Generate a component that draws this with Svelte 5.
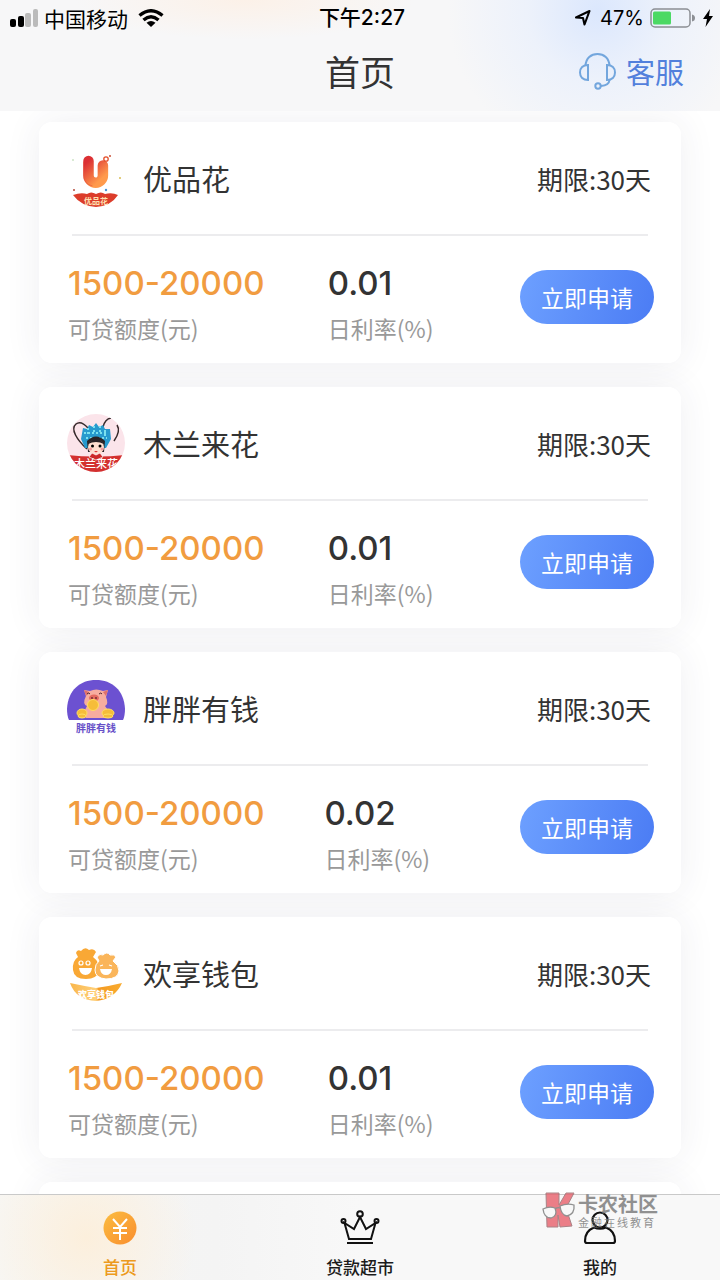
<script lang="ts">
  interface Loan {
    id: string;
    name: string;
    amount: string;
    rate: string;
    days: number;
  }
  const loans: Loan[] = [
    { id: "youpin", name: "优品花", amount: "1500-20000", rate: "0.01", days: 30 },
    { id: "mulan", name: "木兰来花", amount: "1500-20000", rate: "0.01", days: 30 },
    { id: "pang", name: "胖胖有钱", amount: "1500-20000", rate: "0.02", days: 30 },
    { id: "huan", name: "欢享钱包", amount: "1500-20000", rate: "0.01", days: 30 },
  ];
</script>

<div class="app">
  <header class="top">
    <div class="status">
      <div class="side">
        <svg class="signal" width="28" height="18" viewBox="0 0 28 18">
          <rect x="0" y="10" width="6" height="8" rx="2" />
          <rect x="8" y="7" width="6" height="11" rx="2" />
          <rect x="15" y="4" width="6" height="14" rx="2" fill="#bbb" />
          <rect x="23" y="0" width="5" height="18" rx="2" fill="#bbb" />
        </svg>
        <span>中国移动</span>
        <svg class="wifi" width="26" height="18" viewBox="0 0 26 18">
          <g fill="none" stroke="#000" stroke-width="3.400">
            <path d="M1.500 6.500Q13-3 24.500 6.500" />
            <path d="M5.500 11Q13 4.500 20.500 11" />
          </g>
          <path d="M8.500 13.800Q13 10 17.500 13.800L13 18z" />
        </svg>
      </div>
      <div class="time">下午2:27</div>
      <div class="side end">
        <svg width="18" height="18" viewBox="0 0 18 18">
          <path d="M2 8.500L15.500 2L10.500 15.500L9 9z" fill="none" stroke="#000" stroke-width="2.100" stroke-linejoin="round" />
        </svg>
        <span class="percent">47%</span>
        <svg width="46" height="20" viewBox="0 0 46 20">
          <rect x="1" y="1" width="39" height="18" rx="4" fill="none" stroke="#8c8f94" stroke-width="1.500" />
          <rect x="3" y="3.500" width="18" height="13" rx="1.500" fill="#4cd964" />
          <path d="M42 6.500Q45 7 45 10T42 13.500z" fill="#8c8f94" />
        </svg>
        <svg width="12" height="20" viewBox="0 0 12 20">
          <path d="M8 1L1 11h4L3.500 19L11 8H7z" />
        </svg>
      </div>
    </div>
    <div class="title-row">
      <h1>首页</h1>
      <a class="service" href="#service">
        <svg width="37" height="38" viewBox="0 0 37 38" fill="none" stroke="#73a6dd" stroke-width="2">
          <path d="M6.500 13.500C7 6 12 2 18.500 2S30 6 30.500 13.500" />
          <path d="M9 13C4 13 1 16 1 20.500S4 28 9 28z" />
          <path d="M28 13C33 13 36 16 36 20.500S33 28 28 28z" />
          <path d="M30.500 28Q30 33.500 22 34" />
          <circle cx="19" cy="34" r="2.700" />
        </svg>
        客服
      </a>
    </div>
  </header>

  <main>
    {#each loans as loan (loan.id)}
      <article class="card">
        <div class="head">
          <svg class="logo" width="58" height="58" viewBox="0 0 58 58">
            <defs>
              <linearGradient id="red" x1="0" y1="0" x2="0.600" y2="1">
                <stop offset="0" stop-color="#dc3034" />
                <stop offset="1" stop-color="#ff9a4c" />
              </linearGradient>
              <linearGradient id="gold" x1="0" x2="1">
                <stop offset="0" stop-color="#f9b64b" />
                <stop offset="0.500" stop-color="#ffd07a" />
                <stop offset="0.550" stop-color="#f49a22" />
                <stop offset="1" stop-color="#f9ac30" />
              </linearGradient>
              <clipPath id="round"><circle cx="29" cy="29" r="29" /></clipPath>
            </defs>
            {#if loan.id === "youpin"}
              <path d="M21.500 12v14.500a7.200 7.200 0 0 0 14.400 0V16.500" fill="none" stroke="url(#red)" stroke-width="10.500" stroke-linecap="round" />
              <path d="M16.500 13v13q0 9 9 11" fill="none" stroke="#e64a36" stroke-width="1" opacity="0.500" />
              <circle cx="39" cy="10" r="2.200" fill="none" stroke="#e44f2b" stroke-width="1.300" />
              <circle cx="43" cy="7" r="1" fill="#c84e35" />
              <circle cx="6" cy="11" r="0.800" fill="#a9cf9d" />
              <circle cx="53" cy="29" r="1" fill="#d8bd55" />
              <circle cx="7" cy="41" r="1" fill="#b44938" />
              <circle cx="39" cy="41" r="1.200" fill="#4b93d8" />
              <path d="M6 46Q14 43 20 45Q24 42 29 45Q34 42 38 45Q45 43 51 46Q44 57 29 58Q14 57 6 46z" fill="#dc3d2b" />
              <text x="29" y="55" font-size="8" font-weight="700" fill="#ffe2b4" text-anchor="middle">优品花</text>
            {:else if loan.id === "mulan"}
              <g clip-path="url(#round)">
                <rect width="58" height="58" fill="#fbe4ea" />
                <path d="M0 41Q29 44 58 41V58H0z" fill="#d3302f" />
                <path d="M20 35C10 26 3 15 9 10Q14 6 21 14M36 13Q38 5 44 4M50 11Q54 17 47 27" fill="none" stroke="#35292a" stroke-width="1.500" />
                <path d="M14 25L16 14l4 1l2-4l4 2l3-4l3 4l4-2l2 4l5 0l1 10l-5 9H18z" fill="#279ace" />
                <path d="M17 19h24M19 24h21M21 14v7M27 12v8M33 12v8M38 16v6" stroke="#7be1ef" stroke-width="2" stroke-dasharray="2 2" />
                <path d="M20 27Q29 18 38 27L37 38H21z" fill="#292427" />
                <ellipse cx="29" cy="33" rx="8" ry="7.500" fill="#ffe0d1" />
                <path d="M21 30Q29 19 37 30Q29 26 21 30z" fill="#292427" />
                <circle cx="25.500" cy="32" r="1.500" />
                <circle cx="33" cy="32" r="1.500" />
                <circle cx="23.500" cy="35" r="1.500" fill="#f39b9c" />
                <circle cx="35" cy="35" r="1.500" fill="#f39b9c" />
                <path d="M27 37h4l-2 1.500z" fill="#d33" />
                <path d="M22 43l3-4l4 2l4-2l3 4l-7 3z" fill="#cc2929" stroke="#fff" stroke-width="0.700" />
                <text x="29" y="54" font-size="11" font-weight="500" fill="#fff" text-anchor="middle">木兰来花</text>
              </g>
            {:else if loan.id === "pang"}
              <path d="M2 41Q0 37 0 30C1 11 13 1 29 1S57 11 58 30Q58 37 56 41z" fill="#6c51d1" />
              <path d="M17 11l6 1Q29 9 36 12l5-1l-2 7Q42 25 38 27Q44 34 40 39H19Q15 35 20 27Q15 25 19 17z" fill="#f7ad9f" />
              <path d="M17 11l5 2l-3 4zM41 11l-5 2l3 4z" fill="#df706c" />
              <ellipse cx="27" cy="19" rx="5" ry="3.500" fill="#e56b60" />
              <circle cx="25" cy="19" r="1" fill="#752e30" />
              <circle cx="29" cy="19" r="1" fill="#752e30" />
              <path d="M20 15q2-2 3 0M32 15q2-2 3 0" fill="none" stroke="#4d2630" />
              <g fill="#f6bd3a" stroke="#ffe063" stroke-width="1">
                <circle cx="26" cy="26" r="5.500" />
                <ellipse cx="15" cy="34" rx="5" ry="4" />
                <ellipse cx="41" cy="34" rx="6" ry="4" />
                <ellipse cx="15" cy="37" rx="4" ry="2" />
                <ellipse cx="41" cy="37" rx="5" ry="2" />
              </g>
              <text x="29" y="53" font-size="10" font-weight="700" fill="#6750c8" text-anchor="middle">胖胖有钱</text>
            {:else}
              <g transform="translate(0 2)">
                <path d="M11 11L9 7Q10 3 14 5Q18 0 22 4Q27 2 29 6L26 11Q33 16 32 25Q30 33 19 33Q7 33 6 24Q5 15 11 11z" fill="#f9a835" />
                <path d="M32 15l-2-4q3-4 6-2q4-4 7 0q4-1 6 2l-3 4q6 4 6 10q-1 8-13 8q-11-1-11-9q0-6 4-9z" fill="#fab55a" stroke="#fff" stroke-width="1" />
                <g fill="none" stroke="#fff" stroke-width="1.200">
                  <circle cx="14" cy="17" r="2" />
                  <circle cx="21" cy="17" r="2" />
                  <path d="M33 20l3-1M42 19l3 1" />
                </g>
                <path d="M12 22h13q-1 7-6.500 7T12 22zM33 23h12q-1 6-6 6t-6-6z" fill="#fff" />
                <path d="M3 37Q17 40 29 42Q43 40 55 37Q48 53 29 55Q9 54 3 37z" fill="url(#gold)" />
                <text x="29" y="52" font-size="9" font-weight="900" fill="#fff" text-anchor="middle">欢享钱包</text>
              </g>
            {/if}
          </svg>
          <h2>{loan.name}</h2>
          <span class="term">期限:{loan.days}天</span>
        </div>
        <div class="body">
          <div class="figure">
            <strong class="amount">{loan.amount}</strong>
            <span class="label">可贷额度(元)</span>
          </div>
          <div class="figure rate">
            <strong>{loan.rate}</strong>
            <span class="label">日利率(%)</span>
          </div>
          <button type="button">立即申请</button>
        </div>
      </article>
    {/each}
    <article class="card upcoming"></article>
  </main>

  <nav>
    <a class="active" href="#home">
      <svg width="34" height="34" viewBox="0 0 34 34">
        <defs>
          <linearGradient id="coin" x1="0" y1="0" x2="1" y2="1">
            <stop offset="0" stop-color="#fbbd42" />
            <stop offset="1" stop-color="#f98d2d" />
          </linearGradient>
        </defs>
        <circle cx="17" cy="17" r="16.500" fill="url(#coin)" />
        <path d="M10 8L17 16L24 8M17 16v13M10 17h14M10 22h14" fill="none" stroke="#fff" stroke-width="2" />
      </svg>
      首页
    </a>
    <a href="#market">
      <svg width="40" height="36" viewBox="0 0 40 36" fill="none" stroke="#111" stroke-width="2">
        <circle cx="20" cy="5" r="2.800" />
        <circle cx="3.500" cy="12" r="2" />
        <circle cx="36.500" cy="12" r="2" />
        <path d="M4.500 14L9 30h22l4.500-16L26 20L20 8L14 20z" />
        <path d="M7 34h26" />
      </svg>
      贷款超市
    </a>
    <a href="#mine">
      <svg width="34" height="34" viewBox="0 0 34 34" fill="none" stroke="#111" stroke-width="2.200">
        <circle cx="17" cy="9" r="7.500" />
        <path d="M11 16.500Q2 20 2 30Q2 32 4 32H30Q32 32 32 30Q32 20 23 16.500Q17 19 11 16.500" />
      </svg>
      我的
    </a>
    <div class="watermark">
      <svg width="36" height="36" viewBox="0 0 36 36">
        <path d="M5 1h13v12L25 1h8L25 16L31 34L19 35L17 23V35H6z" fill="#e8606c" stroke="#96666a" stroke-width="1" />
        <g fill="#f8f8f8" stroke="#777" stroke-width="1.300">
          <path d="M2 17Q8 14 14 16Q17 24 10 26Q3 26 2 17z" />
          <path d="M19 14Q26 11 33 13Q34 22 26 24Q20 23 19 14z" />
          <path d="M14 17Q17 15 19 16" fill="none" />
        </g>
      </svg>
      <div>
        <b>卡农社区</b>
        <small>金融在线教育</small>
      </div>
    </div>
  </nav>
</div>

<style>
  :global(body) {
    margin: 0;
    background: #fff;
  }
  .app {
    display: flex;
    flex-direction: column;
    height: 100vh;
    overflow: hidden;
    font-family: "Noto Sans CJK SC", sans-serif;
    color: #333;
  }
  svg {
    display: block;
    flex: none;
  }
  a {
    color: inherit;
    text-decoration: none;
  }
  .top {
    flex: none;
    padding-bottom: 6px;
    background:
      radial-gradient(circle at 83% 10%, #dbe7fd 0, rgba(230, 238, 253, 0.6) 70px, transparent 150px),
      radial-gradient(ellipse at 34% 0, #fcf1e8 0, transparent 170px),
      #f7f7f8;
  }
  .status {
    display: grid;
    grid-template-columns: 1fr auto 1fr;
    align-items: center;
    height: 36px;
    padding: 0 6px 0 10px;
    font-size: 21px;
    line-height: 36px;
    color: #000;
  }
  .side {
    display: flex;
    align-items: center;
    gap: 6px;
  }
  .wifi {
    margin-left: 4px;
  }
  .end {
    justify-content: flex-end;
  }
  .percent {
    padding-left: 2px;
    font-family: Inter, sans-serif;
    font-size: 20px;
  }
  .time {
    font-family: Inter, "Noto Sans CJK SC", sans-serif;
    font-size: 21px;
    font-weight: 500;
  }
  .title-row {
    display: grid;
    grid-template-columns: 1fr auto 1fr;
    align-items: center;
    height: 69px;
    padding: 0 36px;
  }
  h1 {
    grid-column: 2;
    margin: 0;
    font-size: 35px;
    font-weight: 400;
    line-height: 69px;
  }
  .service {
    display: flex;
    align-items: center;
    justify-content: flex-end;
    gap: 10px;
    font-size: 29px;
    color: #5280dc;
  }
  main {
    display: flex;
    flex: 1;
    flex-direction: column;
    gap: 24px;
    min-height: 0;
    padding: 11px 39px 0;
    overflow-y: auto;
    scrollbar-width: none;
    isolation: isolate;
  }
  .card {
    position: relative;
    flex: none;
    border-radius: 13px;
    background: #fff;
  }
  /* shadow sits behind every card so neighbours stay white */
  .card::before {
    content: "";
    position: absolute;
    inset: 0;
    z-index: -1;
    border-radius: 13px;
    box-shadow: 0 0 36px rgba(50, 50, 90, 0.08);
  }
  .head {
    display: flex;
    align-items: center;
    height: 112px;
    padding: 0 30px 0 28px;
  }
  .head h2 {
    flex: 1;
    margin: 0 0 0 18px;
    font-size: 29px;
    font-weight: 400;
  }
  .term {
    font-size: 26px;
  }
  .body {
    display: flex;
    align-items: center;
    height: 122px;
    margin: 0 33px;
    padding-bottom: 5px;
    border-top: 2px solid #ececee;
  }
  .figure {
    display: flex;
    flex-direction: column;
    width: 204px;
    margin-left: -4px;
    padding-top: 16px;
  }
  .figure strong {
    font-family: Inter, sans-serif;
    font-size: 33px;
    font-weight: 500;
    line-height: 46px;
    white-space: nowrap;
  }
  .figure .amount {
    color: #f19c40;
  }
  /* column is as wide as its number, the label runs past it */
  .rate {
    flex: 1;
    display: grid;
    grid-template-columns: max-content;
    justify-content: center;
    margin: 0;
  }
  .rate .label {
    width: 0;
  }
  .label {
    font-size: 23px;
    line-height: 44px;
    white-space: nowrap;
    color: #999;
  }
  button {
    width: 134px;
    height: 54px;
    margin: 0 -6px 0 72px;
    padding: 0;
    border: 0;
    border-radius: 27px;
    background: linear-gradient(105deg, #6da0ff, #4b7cf4);
    font-family: inherit;
    font-size: 23px;
    color: #fff;
  }
  .upcoming {
    min-height: 241px;
  }
  nav {
    position: relative;
    display: flex;
    flex: none;
    height: 85px;
    border-top: 1px solid #c9c9c9;
    background:
      radial-gradient(circle at 12% 50%, #fcefdc 0, transparent 110px),
      linear-gradient(90deg, #f7f7f5, #f4f4f4 30%, #f8f8f8 50%);
  }
  nav a {
    display: flex;
    flex: 1;
    flex-direction: column;
    align-items: center;
    justify-content: flex-end;
    gap: 9px;
    font-size: 17px;
    font-weight: 500;
    line-height: 26px;
    color: #1b1b1b;
  }
  nav .active {
    color: #ec9a20;
  }
  .watermark {
    position: absolute;
    top: -3px;
    right: 62px;
    display: flex;
    align-items: center;
    gap: 1px;
    opacity: 0.8;
    color: #777;
    pointer-events: none;
  }
  .watermark b,
  .watermark small {
    display: block;
    font-size: 20px;
    line-height: 24px;
  }
  .watermark small {
    font-size: 11px;
    line-height: 12px;
    letter-spacing: 2px;
  }
</style>
